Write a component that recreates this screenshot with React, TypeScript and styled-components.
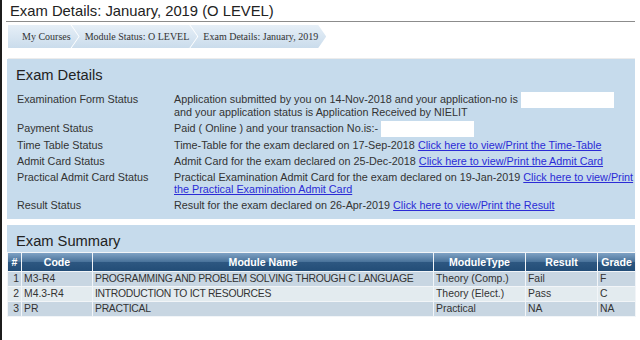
import React from 'react';
import styled, { createGlobalStyle } from 'styled-components';

const GlobalStyle = createGlobalStyle`
  html, body {
    margin: 0;
    padding: 0;
    background: #ffffff;
  }
  body {
    font-family: 'Liberation Sans', Arial, sans-serif;
  }
`;

const Page = styled.div`
  box-sizing: border-box;
  min-height: 340px;
  width: 640px;
  border-left: 2px solid #1c1c1c;
  padding: 0 5px 0 4px;
`;

const PageTitle = styled.h1`
  margin: 0;
  padding: 2px 0 1px 4px;
  font-size: 14.8px;
  line-height: 18px;
  font-weight: normal;
  color: #222;
  border-bottom: 1px solid #8c8c8c;
`;

const Breadcrumb = styled.div`
  display: flex;
  margin: 3px 0 0 2px;
  height: 23px;
`;

const Crumb = styled.div<{ $first?: boolean }>`
  display: flex;
  align-items: center;
  height: 100%;
  padding: ${(p) => (p.$first ? '0 8px 0 14px' : '0 8px 0 13px')};
  margin-left: ${(p) => (p.$first ? '0' : '-7px')};
  background: linear-gradient(#e6eff7, #cadcec);
  font-family: 'Liberation Serif', 'Times New Roman', serif;
  font-size: 10px;
  color: #333;
  white-space: nowrap;
  clip-path: ${(p) =>
    p.$first
      ? 'polygon(0 0, calc(100% - 8px) 0, 100% 50%, calc(100% - 8px) 100%, 0 100%)'
      : 'polygon(0 0, calc(100% - 8px) 0, 100% 50%, calc(100% - 8px) 100%, 0 100%, 8px 50%)'};
`;

const Divider = styled.div`
  margin: 10px 0 0 2px;
  border-top: 1px solid #ececec;
`;

const Panel = styled.section<{ $gap?: number }>`
  margin: ${(p) => p.$gap ?? 0}px 0 0 1px;
  background: #c6dbec;
  padding: 0;
`;

const PanelTitle = styled.h2<{ $h?: number }>`
  margin: 0;
  padding: 7px 0 0 9px;
  height: ${(p) => p.$h ?? 28}px;
  box-sizing: border-box;
  font-size: 14.7px;
  line-height: 18px;
  font-weight: normal;
  color: #222;
`;

const DetailsGrid = styled.div`
  display: grid;
  grid-template-columns: 157px 1fr;
  padding: 4px 0 6px 10px;
  font-size: 10.8px;
  line-height: 12.5px;
  color: #333;
`;

const Label = styled.div`
  padding: 2px 0 1.5px;
`;

const Value = styled.div`
  padding: 2px 0 1.5px;
`;

const NoWrap = styled.span`
  white-space: nowrap;
`;

const Masked = styled.span`
  display: inline-block;
  width: 93px;
  height: 16px;
  margin: -2px 0 -2px 3px;
  vertical-align: middle;
  background: #ffffff;
`;

const Link = styled.a`
  color: #2b2bd6;
  text-decoration: underline;
`;

const SummaryTable = styled.table`
  width: 100%;
  table-layout: fixed;
  border-collapse: separate;
  border-spacing: 1px;
  background: #f2f5f8;
  font-size: 10.4px;
  color: #333;
`;

const HeadCell = styled.th<{ $w: number }>`
  box-sizing: border-box;
  width: ${(p) => p.$w}px;
  height: 18px;
  padding: 0 2px;
  background: linear-gradient(#7fa2c4 0%, #4a739b 48%, #2d5781 52%, #234d77 100%);
  color: #fff;
  font-size: 10.6px;
  font-weight: bold;
  text-align: center;
  white-space: nowrap;
  overflow: hidden;
`;

const Row = styled.tr<{ $alt?: boolean }>`
  background: ${(p) => (p.$alt ? '#e3ebef' : '#c8d6e2')};
`;

const Cell = styled.td<{ $right?: boolean; $caps?: boolean }>`
  height: 14px;
  padding: 0 2px;
  line-height: 14px;
  text-align: ${(p) => (p.$right ? 'right' : 'left')};
  letter-spacing: ${(p) => (p.$caps ? '-0.3px' : 'normal')};
  white-space: nowrap;
  overflow: hidden;
`;

const columns = [
  { title: '#', width: 13 },
  { title: 'Code', width: 70 },
  { title: 'Module Name', width: 340 },
  { title: 'ModuleType', width: 91 },
  { title: 'Result', width: 71 },
  { title: 'Grade', width: 37 },
];

const modules = [
  { no: 1, code: 'M3-R4', name: 'PROGRAMMING AND PROBLEM SOLVING THROUGH C LANGUAGE', type: 'Theory (Comp.)', result: 'Fail', grade: 'F' },
  { no: 2, code: 'M4.3-R4', name: 'INTRODUCTION TO ICT RESOURCES', type: 'Theory (Elect.)', result: 'Pass', grade: 'C' },
  { no: 3, code: 'PR', name: 'PRACTICAL', type: 'Practical', result: 'NA', grade: 'NA' },
];

const App = () => {
  return (
    <>
      <GlobalStyle />
      <Page>
        <PageTitle>Exam Details: January, 2019 (O LEVEL)</PageTitle>
        <Breadcrumb>
          <Crumb $first>My Courses</Crumb>
          <Crumb>Module Status: O LEVEL</Crumb>
          <Crumb>Exam Details: January, 2019</Crumb>
        </Breadcrumb>
        <Divider />

        <Panel>
          <PanelTitle>Exam Details</PanelTitle>
          <DetailsGrid>
            <Label>Examination Form Status</Label>
            <Value>
              Application submitted by you on 14-Nov-2018 and your application-no is
              <Masked />
              <br />
              and your application status is Application Received by NIELIT
            </Value>
            <Label>Payment Status</Label>
            <Value>
              Paid ( Online ) and your transaction No.is:-
              <Masked />
            </Value>
            <Label>Time Table Status</Label>
            <Value>
              Time-Table for the exam declared on 17-Sep-2018{' '}
              <Link href="#">Click here to view/Print the Time-Table</Link>
            </Value>
            <Label>Admit Card Status</Label>
            <Value>
              Admit Card for the exam declared on 25-Dec-2018{' '}
              <Link href="#">Click here to view/Print the Admit Card</Link>
            </Value>
            <Label>Practical Admit Card Status</Label>
            <Value>
              <NoWrap>
                Practical Examination Admit Card for the exam declared on 19-Jan-2019{' '}
                <Link href="#">Click here to view/Print</Link>
              </NoWrap>
              <br />
              <Link href="#">the Practical Examination Admit Card</Link>
            </Value>
            <Label>Result Status</Label>
            <Value>
              Result for the exam declared on 26-Apr-2019{' '}
              <Link href="#">Click here to view/Print the Result</Link>
            </Value>
          </DetailsGrid>
        </Panel>

        <Panel $gap={6}>
          <PanelTitle $h={27}>Exam Summary</PanelTitle>
          <SummaryTable>
            <thead>
              <tr>
                {columns.map((c) => (
                  <HeadCell key={c.title} $w={c.width}>
                    {c.title}
                  </HeadCell>
                ))}
              </tr>
            </thead>
            <tbody>
              {modules.map((m) => (
                <Row key={m.no} $alt={m.no % 2 === 0}>
                  <Cell $right>{m.no}</Cell>
                  <Cell>{m.code}</Cell>
                  <Cell $caps>{m.name}</Cell>
                  <Cell>{m.type}</Cell>
                  <Cell>{m.result}</Cell>
                  <Cell>{m.grade}</Cell>
                </Row>
              ))}
            </tbody>
          </SummaryTable>
        </Panel>
      </Page>
    </>
  );
};

export default App;
